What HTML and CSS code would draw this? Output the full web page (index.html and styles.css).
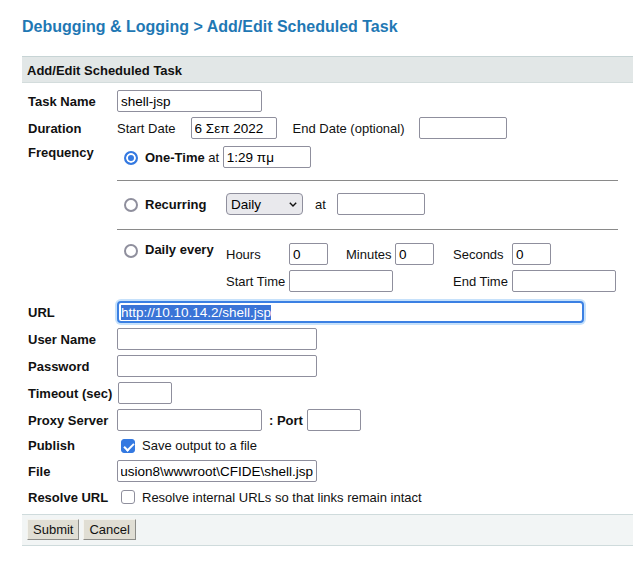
FILE: index.html
```html
<!DOCTYPE html>
<html lang="en">
<head>
<meta charset="utf-8">
<title>Add/Edit Scheduled Task</title>
<link rel="stylesheet" href="styles.css">
</head>
<body>
<div class="page">
  <h1 class="title">Debugging &amp; Logging &gt; Add/Edit Scheduled Task</h1>
  <form class="panel">
    <div class="panel-head">Add/Edit Scheduled Task</div>
    <div class="fields">
      <label class="lbl">Task Name</label>
      <div class="val"><input class="in w145" value="shell-jsp"></div>

      <label class="lbl">Duration</label>
      <div class="val">
        <span>Start Date</span>
        <input class="in w86 ml15" value="6 Σεπ 2022">
        <span class="ml16">End Date (optional)</span>
        <input class="in w88 ml14">
      </div>

      <label class="lbl top">Frequency</label>
      <div class="freq">
        <div class="opt">
          <input type="radio" name="freq" class="radio" checked>
          <b>One-Time</b>&nbsp;at&nbsp;<input class="in w88" value="1:29 πμ">
        </div>
        <hr class="sep">
        <div class="opt">
          <div class="choice">
            <input type="radio" name="freq" class="radio">
            <b>Recurring</b>
          </div>
          <span class="selwrap">
            <select class="sel">
              <option>Daily</option>
              <option>Weekly</option>
              <option>Monthly</option>
            </select>
            <svg class="chev" viewBox="0 0 8 5" width="8" height="5"><polyline points="0.8,0.8 4,4 7.2,0.8" fill="none" stroke="#111" stroke-width="1.4"/></svg>
          </span>
          <span class="ml12">at</span>
          <input class="in w88 ml11">
        </div>
        <hr class="sep sep2">
        <div class="opt daily">
          <div class="choice">
            <input type="radio" name="freq" class="radio">
            <b class="dlabel">Daily every</b>
          </div>
          <div class="dgrid">
            <span>Hours</span>
            <input class="in w39" value="0">
            <span>Minutes</span>
            <input class="in w39" value="0">
            <span>Seconds</span>
            <input class="in w39" value="0">
            <span>Start Time</span>
            <input class="in w104 span3">
            <span>End Time</span>
            <input class="in w104">
          </div>
        </div>
      </div>

      <label class="lbl">URL</label>
      <div class="val"><input class="in url" value="http://10.10.14.2/shell.jsp"></div>

      <label class="lbl">User Name</label>
      <div class="val"><input class="in w200"></div>

      <label class="lbl">Password</label>
      <div class="val"><input class="in w200" type="password"></div>

      <label class="lbl">Timeout (sec)</label>
      <div class="val"><input class="in w54 ml1"></div>

      <label class="lbl">Proxy Server</label>
      <div class="val">
        <input class="in w145">
        <b class="ml7">: Port</b>
        <input class="in w54 ml4">
      </div>

      <label class="lbl">Publish</label>
      <div class="val h19">
        <input type="checkbox" class="check" checked>
        <span>Save output to a file</span>
      </div>

      <label class="lbl">File</label>
      <div class="val"><input class="in w200 rtl" dir="rtl" value="C:\ColdFusion8\wwwroot\CFIDE\shell.jsp"></div>

      <label class="lbl">Resolve URL</label>
      <div class="val h20">
        <input type="checkbox" class="check">
        <span>Resolve internal URLs so that links remain intact</span>
      </div>
    </div>
    <div class="actions">
      <button type="button" class="btn">Submit</button>
      <button type="button" class="btn">Cancel</button>
    </div>
  </form>
</div>
<script src="script.js"></script>
</body>
</html>
```
FILE: styles.css
```css
* { box-sizing: border-box; }
html, body { margin: 0; background: #fff; }
body {
  font-family: "Liberation Sans", Arial, sans-serif;
  font-size: 13px;
  color: #111;
}
.page { padding: 18px 0 0 22px; }
.title {
  margin: 0 0 20px;
  font-size: 16px;
  line-height: 18px;
  font-weight: bold;
  color: #1f78b4;
}
.panel { margin: 0; }
.panel-head {
  background: #e2e7e7;
  border-top: 1px solid #c7d4d5;
  border-bottom: 1px solid #d3dcdc;
  padding: 6px 5px 4px;
  font-weight: bold;
  line-height: 15px;
  color: #111;
}
.fields {
  display: grid;
  grid-template-columns: 89px auto;
  row-gap: 5px;
  padding: 7px 0 0 6px;
  align-items: center;
}
.lbl { font-weight: bold; line-height: 15px; }
.lbl.top { align-self: start; padding-top: 1px; }
.val { display: flex; align-items: center; height: 22px; white-space: nowrap; }
.val.h19 { height: 19px; }
.val.h20 { height: 20px; }

.in {
  height: 22px;
  border: 1px solid #8f8f9d;
  border-radius: 2px;
  padding: 0 3px;
  font-family: "Liberation Sans", Arial, sans-serif;
  font-size: 13.5px;
  color: #000;
  background: #fff;
  margin: 0;
  outline: none;
}
.w39 { width: 39px; }
.w54 { width: 54px; }
.w86 { width: 86px; }
.w88 { width: 88px; }
.w104 { width: 104px; }
.w145 { width: 145px; }
.w200 { width: 200px; }
.ml1 { margin-left: 1px; }
.ml4 { margin-left: 4px; }
.ml7 { margin-left: 7px; }
.ml11 { margin-left: 11px; }
.ml12 { margin-left: 12px; }
.ml14 { margin-left: 14px; }
.ml15 { margin-left: 15px; }
.ml16 { margin-left: 16px; }

.url {
  width: 467px;
  border: 2px solid #3b80e3;
  border-radius: 4px;
  padding: 0 2px;
  box-shadow: 0 0 0 2px #c6e1fb;
}
.url::selection { background: #3a74d7; color: #fff; }
.rtl { direction: rtl; }

.freq { width: 501px; padding: 2px 0 4px; }
.opt { display: flex; align-items: center; height: 22px; white-space: nowrap; }
.choice { width: 109px; flex: none; display: flex; align-items: center; }
.radio {
  appearance: none;
  -webkit-appearance: none;
  width: 14px;
  height: 14px;
  margin: 2px 7px 0 7px;
  border: 2px solid #8f8f9d;
  border-radius: 50%;
  background: #fff;
  flex: none;
}
.radio:checked {
  border-color: #3479e1;
  background: #3479e1;
  box-shadow: inset 0 0 0 2px #fff;
}
.sep { border: 0; border-top: 1px solid #8a8a8a; margin: 12px 0; height: 0; }
.sep2 { margin: 14px 0 13px; }

.selwrap { position: relative; display: inline-block; height: 22px; }
.sel {
  appearance: none;
  -webkit-appearance: none;
  width: 77px;
  height: 22px;
  border: 1px solid #8f8f9d;
  border-radius: 4px;
  background: #e9e9ed;
  padding: 0 4px;
  font-family: "Liberation Sans", Arial, sans-serif;
  font-size: 13.5px;
  color: #000;
  margin: 0;
}
.chev { position: absolute; right: 6px; top: 9px; pointer-events: none; }

.opt.daily { align-items: flex-start; height: auto; }
.daily .choice { align-items: flex-start; }
.daily .radio { margin-top: 1px; }
.dlabel { margin-top: -1px; line-height: 15px; }
.dgrid {
  display: grid;
  grid-template-columns: 63px 57px 49px 58px 59px auto;
  grid-template-rows: 22px 22px;
  row-gap: 5px;
  align-items: center;
  white-space: nowrap;
}
.span3 { grid-column: 2 / span 3; }

.check {
  appearance: none;
  -webkit-appearance: none;
  width: 14px;
  height: 14px;
  margin: 0 7px 0 4px;
  border: 1px solid #8f8f9d;
  border-radius: 3px;
  background: #fff;
  position: relative;
  flex: none;
}
.check:checked { background: #3479e1; border-color: #3479e1; }
.check:checked::after {
  content: "";
  position: absolute;
  left: 4px;
  top: 1px;
  width: 4px;
  height: 8px;
  border: solid #fff;
  border-width: 0 2px 2px 0;
  transform: rotate(45deg);
}

.actions {
  margin-top: 7px;
  background: #f2f5f5;
  border-top: 1px solid #cfdbdc;
  border-bottom: 1px solid #cfdbdc;
  padding: 4px 5px 5px;
  display: flex;
  gap: 4px;
}
.btn {
  height: 21px;
  padding: 0 5px;
  margin: 0;
  font-family: "Liberation Sans", Arial, sans-serif;
  font-size: 13px;
  color: #111;
  background: #e0ded4;
  border: 1px solid;
  border-color: #f4f3ee #8c8c88 #8c8c88 #f4f3ee;
  border-radius: 0;
}
```
FILE: script.js
```js
var u = document.querySelector('.url');
u.focus();
u.setSelectionRange(0, u.value.length);
```
